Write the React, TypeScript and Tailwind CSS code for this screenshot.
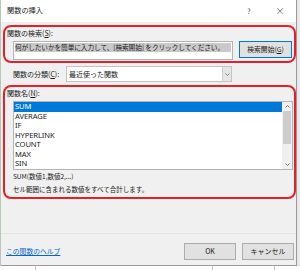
import React from "react";

const jp = { fontFamily: '"Noto Sans CJK JP", "Noto Sans", sans-serif' };

const items = ["SUM", "AVERAGE", "IF", "HYPERLINK", "COUNT", "MAX", "SIN"];

export default function App() {
  return (
    <div className="w-[300px] h-[270px] bg-white flex flex-col overflow-hidden" style={jp}>
      <div className="flex h-[266px]">
        <div className="w-px bg-[#b8c8b8]" />
        <div className="w-[296px] h-[266px] flex flex-col bg-[#f0f0f0] border-r border-b border-[#9a9a9a] text-[#1a1a1a]">
          {/* title bar */}
          <div className="h-[22px] bg-white flex items-center text-[7.2px] leading-none">
            <div className="pl-[6px] flex-1">関数の挿入</div>
            <div className="w-[10px] text-center text-[7px] text-[#444]">?</div>
            <div className="w-[20px]" />
            <div className="w-[12px] text-center text-[10px] text-[#444] font-light">×</div>
            <div className="w-[10px]" />
          </div>

          {/* search box */}
          <div className="ml-[2px] mt-[3px] w-[293px] h-[38px] border-2 border-[#e5202a] rounded-[8px] flex flex-col">
            <div className="pl-[2px] pt-[2px] text-[7px] leading-[9px]">
              関数の検索(<span className="underline">S</span>):
            </div>
            <div className="flex mt-[3px] items-start">
              <div className="ml-[8px] w-[220px] h-[19px] bg-white border border-[#b4b4b4] px-[1px] pt-[1px]">
                <div className="bg-[#c9c9c9] text-[6.7px] leading-[9px] whitespace-nowrap overflow-hidden tracking-[-0.1px]">
                  何がしたいかを簡単に入力して、[検索開始] をクリックしてください。
                </div>
              </div>
              <div className="ml-[6px] w-[53px] h-[17px] bg-[#e1e1e1] border border-[#0078d7] flex items-center justify-center text-[6.8px] leading-none">
                検索開始(<span className="underline">G</span>)
              </div>
            </div>
          </div>

          {/* category */}
          <div className="flex items-center mt-[3px] h-[16px]">
            <div className="pl-[12px] w-[65px] text-[7px] leading-none whitespace-nowrap">
              関数の分類(<span className="underline">C</span>):
            </div>
            <div className="w-[166px] h-[16px] bg-white border border-[#c4c4c4] flex items-center">
              <div className="flex-1 pl-[2px] text-[7px] leading-none">最近使った関数</div>
              <div className="w-[9px] h-[14px] bg-[#e6e6e6] border-l border-[#d0d0d0] flex items-center justify-center">
                <svg width="5" height="3" viewBox="0 0 5 3"><path d="M0.5 0.5 L2.5 2.5 L4.5 0.5" stroke="#666" strokeWidth="0.8" fill="none" /></svg>
              </div>
            </div>
          </div>

          {/* function list box */}
          <div className="ml-[2px] mt-[3px] w-[293px] h-[114px] border-2 border-[#e5202a] rounded-[8px] flex flex-col">
            <div className="pl-[2px] pt-[2px] text-[7px] leading-[9px]">
              関数名(<span className="underline">N</span>):
            </div>
            <div className="ml-[8px] mt-[3px] w-[280px] h-[69px] bg-white border border-[#b4b4b4] flex">
              <div className="flex-1 flex flex-col">
                {items.map((it, i) => (
                  <div
                    key={it}
                    className={
                      "h-[9.85px] pl-[1px] flex items-center text-[7.6px] leading-none tracking-[-0.1px] " +
                      (i === 0 ? "bg-[#0078d7] text-white" : "text-[#1a1a1a]")
                    }
                    style={{ fontFamily: '"Noto Sans", "Noto Sans CJK JP", sans-serif' }}
                  >
                    {it}
                  </div>
                ))}
              </div>
              <div className="w-[10px] bg-[#f0f0f0] flex flex-col items-center">
                <div className="h-[9px] flex items-center justify-center">
                  <svg width="5" height="3" viewBox="0 0 5 3"><path d="M0.5 2.5 L2.5 0.5 L4.5 2.5" stroke="#555" strokeWidth="0.8" fill="none" /></svg>
                </div>
                <div className="w-[8px] h-[33px] bg-[#cdcdcd]" />
                <div className="flex-1" />
                <div className="h-[9px] flex items-center justify-center">
                  <svg width="5" height="3" viewBox="0 0 5 3"><path d="M0.5 0.5 L2.5 2.5 L4.5 0.5" stroke="#555" strokeWidth="0.8" fill="none" /></svg>
                </div>
              </div>
            </div>
            <div className="pl-[8px] mt-0 text-[6.5px] leading-[12.5px] whitespace-nowrap">
              <div>SUM(数値1,数値2,...)</div>
              <div>セル範囲に含まれる数値をすべて合計します。</div>
            </div>
          </div>

          <div className="h-[34px]" />
          <div className="h-px bg-[#e4e4e4]" />
          <div className="flex items-center mt-[9px] h-[17px]">
            <div className="pl-[5px] flex-1 text-[6.8px] leading-none text-[#0066cc] underline">この関数のヘルプ</div>
            <div className="w-[52px] h-[17px] bg-[#e1e1e1] border border-[#adadad] flex items-center justify-center text-[7px] leading-none">OK</div>
            <div className="w-[52px] h-[17px] ml-[6px] bg-[#e1e1e1] border border-[#adadad] flex items-center justify-center text-[7px] leading-none">キャンセル</div>
            <div className="w-[2px]" />
          </div>
        </div>
        <div className="flex-1 bg-[#e8e8e8]" />
      </div>
      <div className="flex-1 flex">
        <div className="w-[36px] border-r border-[#c8c8c8]" />
        <div className="w-[177px] border-r border-[#c8c8c8]" />
        <div className="w-[62px] border-r border-[#c8c8c8]" />
      </div>
    </div>
  );
}
